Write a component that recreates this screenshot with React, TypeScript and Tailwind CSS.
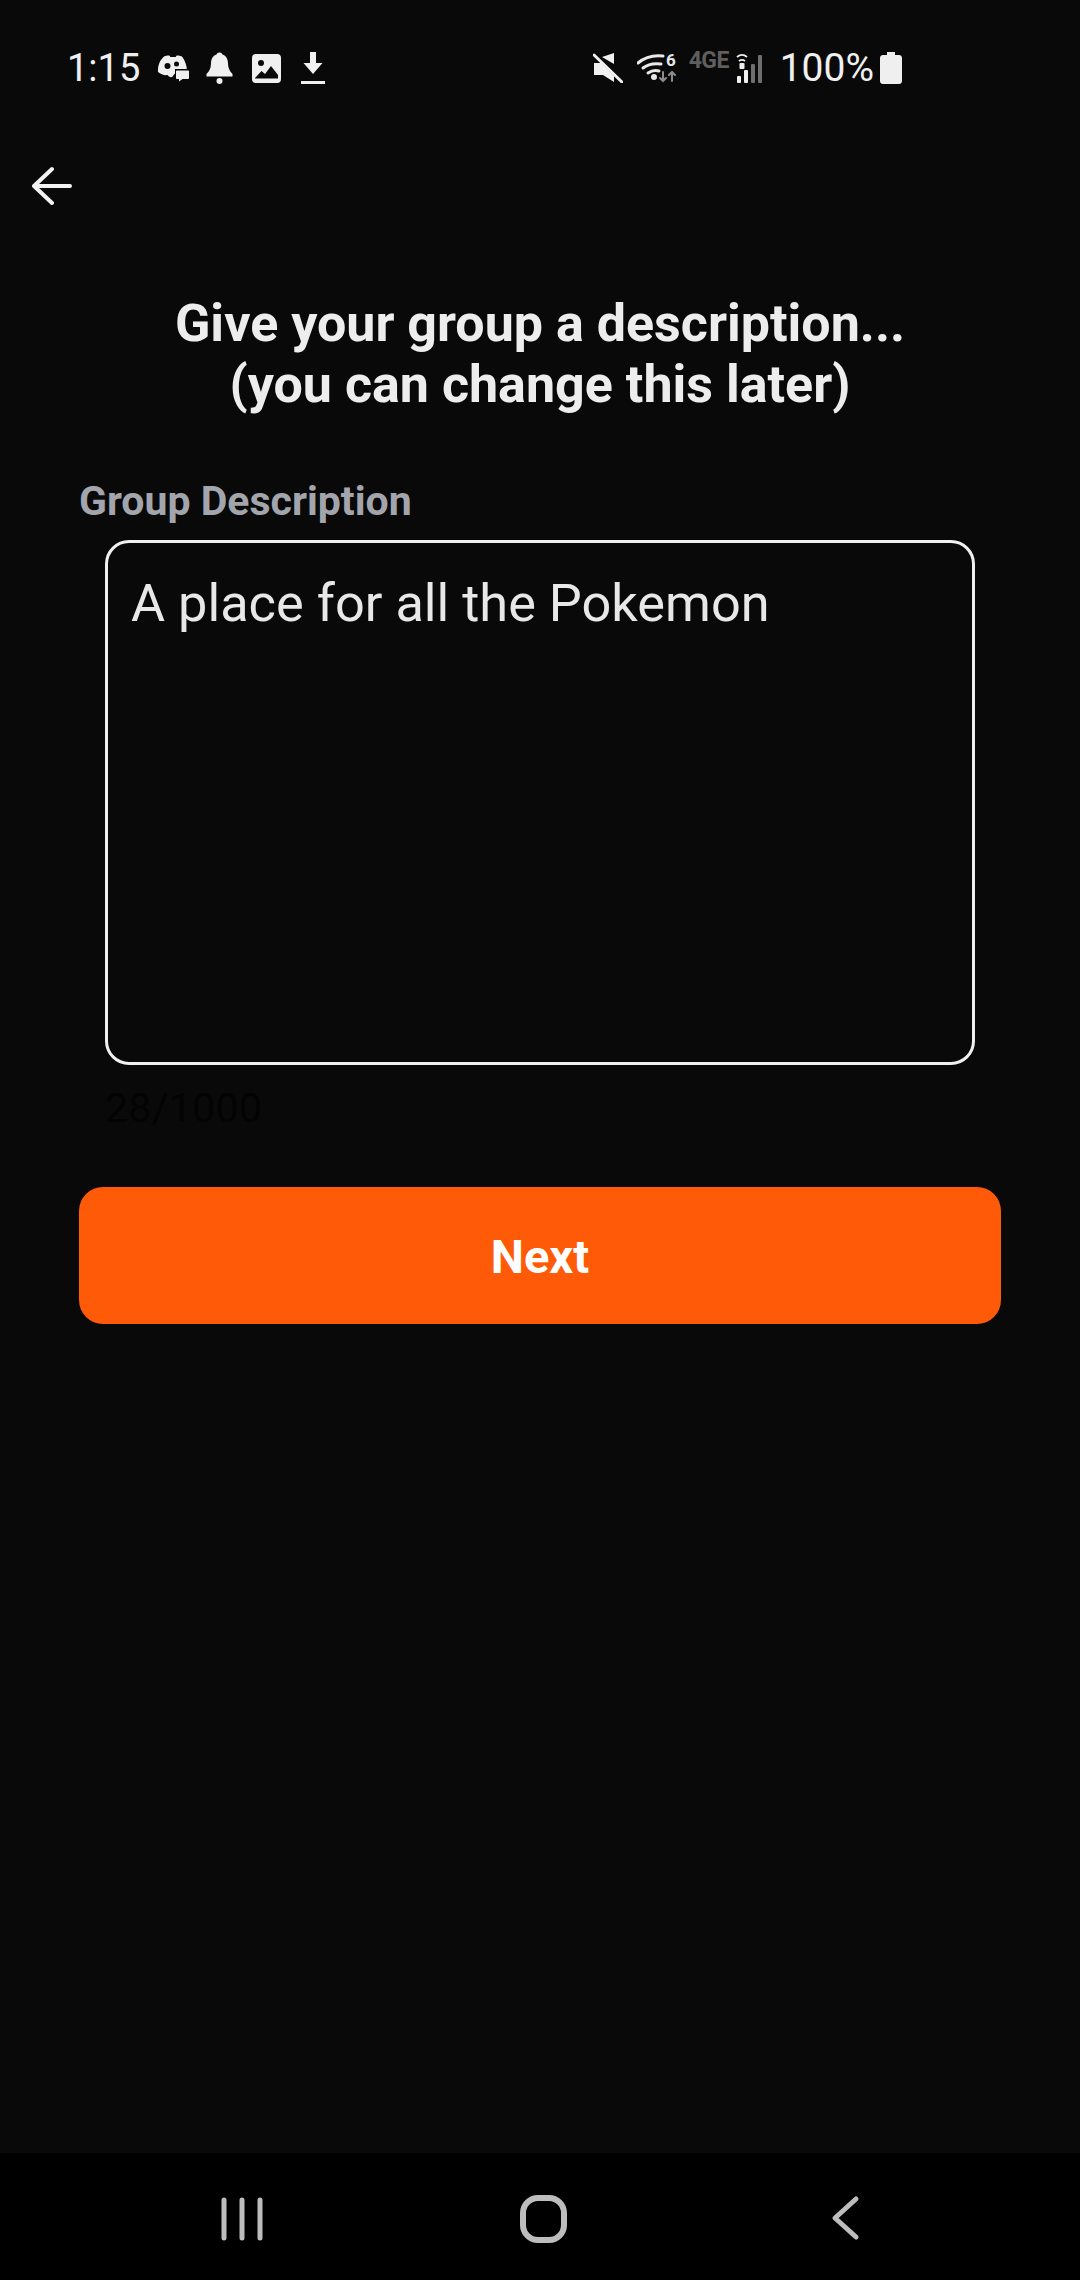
import React from 'react';

const DiscordChat = () => (
    <svg width="33" height="27" viewBox="0 0 33 27" fill="#f0f0f0">
        <path d="M7 1.500c3-1.200 5-1.400 5.800-.6l.5 1h5.400l.5-1c1-.8 3-.5 5.800.6 3 4 4.600 8.500 5 13.500H19v3c-1 .5-2 1-3 3-1 1.500-2.500 1.500-4 .5l-1.500-1.500c-3 .6-6.500-.5-9.500-3C.7 10 3 5 7 1.500z" />
        <circle cx="10.500" cy="11" r="3" fill="#09090a" />
        <circle cx="19.500" cy="9" r="2.500" fill="#09090a" />
        <path d="M18 14h15v12H24l-3.500 2v-2H18z" fill="#09090a" />
        <path d="M20 15.500h11c.6 0 1 .4 1 1v6.500c0 .6-.4 1-1 1h-5.500L22 26.500V24h-2c-.6 0-1-.4-1-1v-6.500c0-.6.4-1 1-1z" />
    </svg>
);

const Bell = () => (
    <svg width="27" height="32" viewBox="0 0 27 32" fill="#f0f0f0">
        <circle cx="13.500" cy="3.500" r="3" />
        <path d="M13.500 2c5.500 0 8.500 4 8.500 9.500 0 4.500 1.500 7.500 4.500 10.500v2.500H.5V22c3-3 4.500-6 4.500-10.500C5 6 8 2 13.500 2z" />
        <circle cx="13.500" cy="29" r="3" />
    </svg>
);

const ImageIcon = () => (
    <svg width="29" height="29" viewBox="0 0 29 29">
        <rect width="29" height="29" rx="4" fill="#f0f0f0" />
        <circle cx="9" cy="9" r="3" fill="#09090a" />
        <path d="M3 24l6.500-7 3.500 3 6-8 7 9v3.500H3z" fill="#09090a" />
    </svg>
);

const Download = () => (
    <svg width="24" height="32" viewBox="0 0 24 32" fill="#f0f0f0">
        <path d="M9 0h6v11h6.500L12 22 2.500 11H9z" />
        <rect y="29" width="24" height="3" />
    </svg>
);

const Mute = () => (
    <svg width="30" height="30" viewBox="0 0 30 30" fill="#f0f0f0">
        <path d="M21 0v11L9 4zM1 10h7l13 13v6l-11-7H1z" />
        <path d="M1 2l28 27" stroke="#f0f0f0" strokeWidth="3" strokeLinecap="round" fill="none" />
    </svg>
);

const Wifi = () => (
    <div className="relative w-[40px] h-[30px]">
        <svg width="40" height="30" viewBox="0 0 40 30" fill="none" stroke="#e8e8e8" strokeWidth="3" strokeLinecap="round">
            <path d="M1 10c7-6 16-8 25-7" />
            <path d="M6 15c5-4 11-5 18-4" />
            <path d="M11 20c3-2 7-3 11-2" />
            <circle cx="17" cy="24" r="1.500" fill="#e8e8e8" />
            <path d="M26 19v9M23 25l3 3 3-3" stroke="#8c8c8c" strokeWidth="2" />
            <path d="M35 28v-9M32 22l3-3 3 3" stroke="#8c8c8c" strokeWidth="2" />
        </svg>
        <span className="absolute right-[1px] top-[-3px] text-[17px] leading-[20px] font-bold text-[#e8e8e8]">6</span>
    </div>
);

const Signal = () => (
    <svg width="28" height="32" viewBox="0 0 28 32" fill="none">
        <rect x="1" y="24" width="4" height="7" rx="1" fill="#f0f0f0" />
        <rect x="8" y="18" width="4" height="13" rx="1" fill="#f0f0f0" />
        <rect x="15" y="12" width="4" height="19" rx="1" fill="#6f6f6f" />
        <rect x="22" y="3" width="4" height="28" rx="1" fill="#6f6f6f" />
        <path d="M1 5c3-2.500 7-2.500 10 0M3 9c2-1.500 4-1.500 6 0" stroke="#f0f0f0" strokeWidth="1.800" />
        <rect x="3.500" y="11" width="5" height="6" rx="1" fill="#f0f0f0" />
    </svg>
);

const Battery = () => (
    <svg width="22" height="32" viewBox="0 0 22 32" fill="#efefef">
        <path d="M7 0h8v3h4c1.700 0 3 1.300 3 3v23c0 1.700-1.300 3-3 3H3c-1.700 0-3-1.300-3-3V6c0-1.700 1.300-3 3-3h4z" />
    </svg>
);

export default function App() {
    return (
        <div className="w-[1080px] h-[2280px] flex flex-col bg-[#09090a] font-['Roboto',sans-serif] overflow-hidden">
            {/* Status bar */}
            <div className="h-[134px] pt-[48px] pl-[67px] pr-[178px] flex justify-between items-start shrink-0">
                <div className="flex items-center h-[40px]">
                    <span className="text-[38px] leading-[40px] text-[#f0f0f0] mr-[17px]">1:15</span>
                    <DiscordChat />
                    <div className="ml-[16px]"><Bell /></div>
                    <div className="ml-[19px]"><ImageIcon /></div>
                    <div className="ml-[20px]"><Download /></div>
                </div>
                <div className="flex items-center h-[40px]">
                    <Mute />
                    <div className="ml-[14px]"><Wifi /></div>
                    <span className="ml-[12px] w-[38px] mb-[14px] text-[23px] leading-[16px] font-bold text-[#5f5f5f] tracking-tight">4GE</span>
                    <div className="ml-[9px]"><Signal /></div>
                    <span className="ml-[16px] text-[39px] leading-[40px] text-[#f0f0f0]">100%</span>
                    <div className="ml-[6px]"><Battery /></div>
                </div>
            </div>

            {/* Header */}
            <div className="h-[159px] pl-[32px] pt-[32px] shrink-0">
                <svg width="40" height="40" viewBox="0 0 40 40" fill="none" stroke="#f2f2f2" strokeWidth="4" strokeLinecap="round" strokeLinejoin="round">
                    <path d="M38 20H2M20 3L2 20l18 17" />
                </svg>
            </div>

            <div className="text-center text-[52px] leading-[61px] font-bold text-[#ededed] shrink-0">
                <div>Give your group a description...</div>
                <div>(you can change this later)</div>
            </div>

            <div className="mt-[63px] pl-[79px] text-[41px] leading-[46px] font-bold text-[#a3a5ad]">Group Description</div>

            <div className="mt-[16px] ml-[105px] w-[870px] h-[525px] border-[3px] border-[#f0f0f0] rounded-[24px] px-[23px] pt-[30px] text-[52.300px] leading-[60px] text-[#e8e8e8] shrink-0">
                A place for all the Pokemon
            </div>

            <div className="mt-[21px] ml-[105px] text-[41.500px] leading-[44px] text-[#030304]">28/1000</div>

            <button className="mt-[57px] ml-[79px] w-[922px] h-[137px] pt-[3px] rounded-[24px] bg-[#ff5a08] text-white text-[47px] font-bold shrink-0">
                Next
            </button>

            <div className="flex-1" />

            {/* Android nav bar */}
            <div className="h-[127px] bg-black shrink-0 flex items-start pt-[42px]">
                <div className="ml-[221px]">
                    <svg width="42" height="46" viewBox="0 0 42 46" fill="none" stroke="#bdbdbd" strokeWidth="5" strokeLinecap="round">
                        <path d="M3 5v38M21 5v38M39 5v38" />
                    </svg>
                </div>
                <div className="ml-[257px]">
                    <svg width="47" height="48" viewBox="0 0 47 48" fill="none" stroke="#bdbdbd" strokeWidth="6">
                        <rect x="3" y="3" width="41" height="42" rx="15" />
                    </svg>
                </div>
                <div className="ml-[263px]">
                    <svg width="30" height="46" viewBox="0 0 30 46" fill="none" stroke="#bdbdbd" strokeWidth="5" strokeLinecap="round" strokeLinejoin="round">
                        <path d="M26 4L5 23l21 19" />
                    </svg>
                </div>
            </div>
        </div>
    );
}
